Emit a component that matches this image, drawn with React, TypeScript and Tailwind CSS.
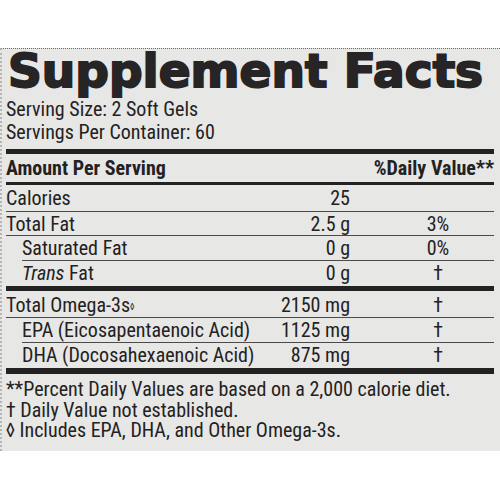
import React from 'react';

type Row = {
  name: React.ReactNode;
  amount: string;
  dv?: string;
  indent?: boolean;
  line?: 'thin' | 'none';
  h: string;
};

const rows: Row[] = [
  { name: 'Calories', amount: '25', h: 'h-[27px] leading-[27px]', line: 'thin' },
  { name: 'Total Fat', amount: '2.5 g', dv: '3%', h: 'h-[24px] leading-[24px]', line: 'thin' },
  { name: 'Saturated Fat', amount: '0 g', dv: '0%', indent: true, h: 'h-[25px] leading-[25px]', line: 'thin' },
  {
    name: (
      <>
        <span className="italic">Trans</span> Fat
      </>
    ),
    amount: '0 g',
    dv: '†',
    indent: true,
    h: 'h-[25px] leading-[25px]',
    line: 'none',
  },
];

const omega: Row[] = [
  {
    name: (
      <>
        Total Omega-3s<sup className="text-[10px] relative -top-[2px]">◊</sup>
      </>
    ),
    amount: '2150 mg',
    dv: '†',
    h: 'h-[27px] leading-[25px] pt-[2px]',
    line: 'thin',
  },
  { name: 'EPA (Eicosapentaenoic Acid)', amount: '1125 mg', dv: '†', indent: true, h: 'h-[25px] leading-[25px]', line: 'thin' },
  { name: 'DHA (Docosahexaenoic Acid)', amount: '875 mg', dv: '†', indent: true, h: 'h-[25px] leading-[25px]', line: 'none' },
];

const FactRow: React.FC<{ row: Row }> = ({ row }) => (
  <div
    className={`flex ${row.h} ${row.indent ? 'ml-[16px]' : ''} ${
      row.line === 'thin' ? 'border-b border-[#4a4a4a]' : ''
    }`}
  >
    <div className="flex-1 min-w-0 whitespace-nowrap">{row.name}</div>
    <div className="w-[120px] shrink-0 text-right whitespace-nowrap">{row.amount}</div>
    <div className="w-[32px] shrink-0" />
    <div className="w-[112px] shrink-0 text-center">{row.dv}</div>
  </div>
);

const App: React.FC = () => {
  return (
    <div className="w-[500px] h-[500px] bg-white pt-[48px]">
      <div
        className="h-[403px] bg-[#e7e7e5] border-t border-[#6b6b6b] border-l-2 border-l-[#b5b5b5] border-dotted pl-[4px] pr-[6px] text-[#232122] text-[20px]"
        style={{ fontFamily: '"Liberation Sans Narrow", "Roboto Condensed", Roboto, sans-serif' }}
      >
        <div
          className="h-[44px] leading-[44px] text-[47px] font-bold pl-[2px] whitespace-nowrap text-[#262425] [-webkit-text-stroke:2px_#262425]"
          style={{ fontFamily: '"DejaVu Sans", sans-serif' }}
        >
          Supplement Facts
        </div>
        <div className="mt-[5px] leading-[23px]">
          <div>Serving Size: 2 Soft Gels</div>
          <div>Servings Per Container: 60</div>
        </div>
        <div className="mt-[5px] h-[5px] bg-[#222]" />
        <div className="flex h-[28px] leading-[28px] font-bold">
          <div className="flex-1">Amount Per Serving</div>
          <div>%Daily Value**</div>
        </div>
        <div className="h-[3px] bg-[#222]" />
        {rows.map((r, i) => (
          <FactRow key={i} row={r} />
        ))}
        <div className="h-[5px] bg-[#222]" />
        {omega.map((r, i) => (
          <FactRow key={i} row={r} />
        ))}
        <div className="h-[6px] bg-[#222]" />
        <div className="mt-[5px] leading-[20.5px] whitespace-nowrap">
          <div>**Percent Daily Values are based on a 2,000 calorie diet.</div>
          <div>† Daily Value not established.</div>
          <div>◊ Includes EPA, DHA, and Other Omega-3s.</div>
        </div>
      </div>
    </div>
  );
};

export default App;
